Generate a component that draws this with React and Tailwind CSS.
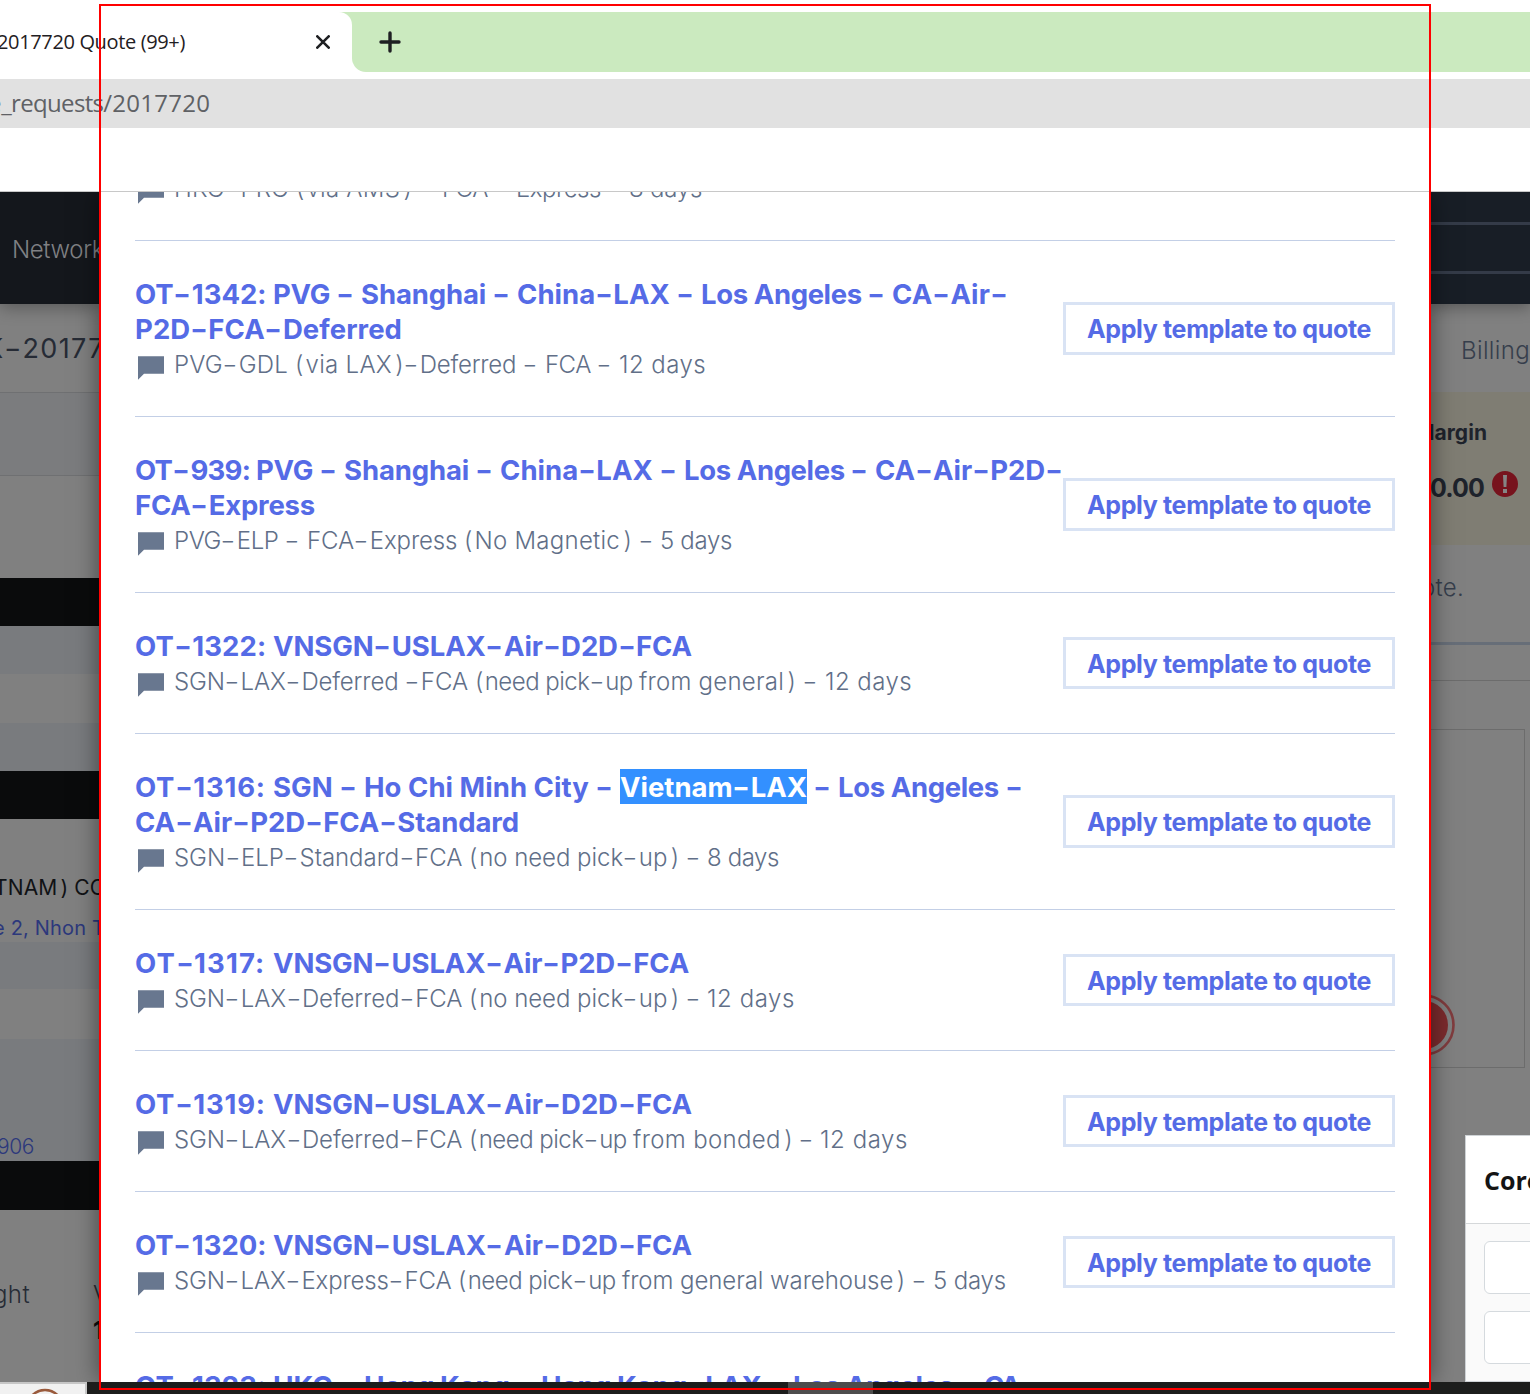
import { useLayoutEffect, useRef } from "react";

/* A run of text whose tracking is computed so that it fills `w` pixels. */
function Fit({ t, w, className = "", plain = false }) {
  const ref = useRef(null);
  useLayoutEffect(() => {
    const el = ref.current;
    const fit = () => {
      el.style.letterSpacing = "0px";
      const a = el.getBoundingClientRect().width;
      el.style.letterSpacing = "1px";
      const b = el.getBoundingClientRect().width;
      el.style.letterSpacing = b > a ? `${(w - a) / (b - a)}px` : "0px";
    };
    fit();
    document.fonts.ready.then(fit);
  }, [t, w]);
  return (
    <span ref={ref} className={"inline-block whitespace-pre " + className}>
      {plain
        ? t
        : t.split(/([-()])/).map((p, i) =>
            p === "-" ? (
              <span key={i} className="inline-block w-[0.66em] text-center">
                <span className="inline-block -translate-x-[0.5px] scale-x-140 tracking-normal">-</span>
              </span>
            ) : p === ")" ? (
              <span key={i} className="ml-[0.14em]">)</span>
            ) : p === "(" ? (
              <span key={i} className="mr-[0.08em]">(</span>
            ) : (
              p
            )
          )}
    </span>
  );
}

const rows = [
  {
    lines: [
      [["OT-1342: ", 138], ["PVG - ", 88], ["Shanghai - ", 156], ["China-LAX - ", 184], ["Los Angeles - ", 191], ["CA-Air-", 116]],
      [["P2D-FCA-Deferred", 267]],
    ],
    note: [["PVG-GDL ", 121], ["(via LAX)", 109], ["-Deferred - ", 141], ["FCA - ", 74], ["12 days", 87]],
  },
  {
    lines: [
      [["OT-939: ", 121], ["PVG - ", 88], ["Shanghai - ", 156], ["China-LAX - ", 184], ["Los Angeles - ", 191], ["CA-Air-P2D-", 188]],
      [["FCA-Express", 180]],
    ],
    note: [["PVG-ELP - ", 133], ["FCA-Express ", 157], ["(No Magnetic)", 168], [" - ", 28], ["5 days", 72]],
  },
  {
    lines: [[["OT-1322: ", 138], ["VNSGN-USLAX-Air-D2D-FCA", 419]]],
    note: [["SGN-LAX-Deferred ", 231], ["-FCA ", 70], ["(need pick-up ", 164], ["from general)", 157], [" - ", 29], ["12 days", 87]],
  },
  {
    lines: [
      [["OT-1316: ", 138], ["SGN - ", 91], ["Ho Chi Minh City - ", 256], ["Vietnam-LAX", 187, true], [" - ", 31], ["Los Angeles -", 185]],
      [["CA-Air-P2D-FCA-Standard", 384]],
    ],
    note: [["SGN-ELP-Standard-FCA ", 295], ["(no need pick-up)", 210], [" - ", 28], ["8 days", 72]],
  },
  {
    lines: [[["OT-1317: ", 138], ["VNSGN-USLAX-Air-P2D-FCA", 416]]],
    note: [["SGN-LAX-Deferred-FCA ", 295], ["(no need pick-up)", 210], [" - ", 28], ["12 days", 88]],
  },
  {
    lines: [[["OT-1319: ", 138], ["VNSGN-USLAX-Air-D2D-FCA", 419]]],
    note: [["SGN-LAX-Deferred-FCA ", 295], ["(need pick-up ", 164], ["from bonded)", 160], [" - ", 27], ["12 days", 88]],
  },
  {
    lines: [[["OT-1320: ", 138], ["VNSGN-USLAX-Air-D2D-FCA", 419]]],
    note: [["SGN-LAX-Express-FCA ", 284], ["(need pick-up ", 164], ["from general ", 148], ["warehouse)", 135], [" - ", 28], ["5 days", 73]],
  },
];

const lastTitle = [["OT-1323: ", 138], ["HKG - ", 91], ["Hong ", 76], ["Kong - ", 101], ["Hong ", 76], ["Kong-LAX - ", 176], ["Los Angeles - ", 191], ["CA-", 52]];

function NoteIcon() {
  return (
    <svg viewBox="0 0 30 24" className="ml-[3px] mt-[10px] h-[24px] w-[30px] shrink-0" fill="#68778f">
      <path d="M0 .3h26v17.5H6L0 23.8z" />
    </svg>
  );
}

function Note({ parts }) {
  return (
    <div className="flex h-[35px] whitespace-pre text-[24px] font-[350] leading-[37px] text-[#616f88]">
      <NoteIcon />
      <div className="ml-[6px] flex">
        {parts.map(([t, w], i) => <Fit key={i} t={t} w={w} />)}
      </div>
    </div>
  );
}

function TitleLine({ parts }) {
  return (
    <div className="flex h-[35px] text-[27.5px] font-bold leading-[37px] text-[#556be6]">
      {parts.map(([t, w, hl], i) => (
        <Fit key={i} t={t} w={w} className={hl ? "h-[35px] bg-[#3390ff] text-white" : ""} />
      ))}
    </div>
  );
}

function Template({ lines, note }) {
  return (
    <li className="flex items-center justify-between border-b border-[#c3cfe6] py-[35px]">
      <div className="w-[928px] shrink-0">
        {lines.map((l, i) => <TitleLine key={i} parts={l} />)}
        <Note parts={note} />
      </div>
      <button className="flex h-[52.5px] w-[332px] shrink-0 items-center justify-center border-[3px] border-[#d9e3f4] pt-[3px] text-[25px] font-bold text-[#556be6]">
        <Fit t="Apply template to quote" w={284} />
      </button>
    </li>
  );
}

function BrowserChrome() {
  return (
    <header className="h-[192px] border-b border-[#c8c8c8] bg-white pt-3 font-['Open_Sans',sans-serif]">
      <div className="flex h-[60px] bg-[#cbeabf]">
        <div className="flex w-[352px] shrink-0 items-center overflow-hidden rounded-tr-[13px] bg-white text-[20px] text-[#1f2023]">
          <Fit plain t="2017720 Quote (99+)" w={188} className="-ml-[3px] shrink-0" />
          <svg viewBox="0 0 14 14" className="ml-[131px] h-[14px] w-[14px]" stroke="#1f2023" strokeWidth="2.6" strokeLinecap="round">
            <path d="M1.3 1.3l11.4 11.4M12.7 1.3L1.3 12.7" />
          </svg>
        </div>
        <div className="flex flex-1 items-center bg-white">
          <div className="flex h-full flex-1 items-center rounded-bl-[14px] bg-[#cbeabf]">
            <svg viewBox="0 0 22 22" className="ml-[27px] h-[22px] w-[22px]" stroke="#1f2023" strokeWidth="3.4" strokeLinecap="round">
              <path d="M11 2v18M2 11h18" />
            </svg>
          </div>
        </div>
      </div>
      <div className="mt-[7px] flex h-[49px] items-center overflow-hidden bg-[#e1e1e1] pb-0.5 text-[24px] text-[#5f6165]">
        <span className="-ml-[12px] whitespace-pre tracking-[-0.2px]">e</span>
        <Fit plain t="_requests" w={102} />
        <Fit plain t="/2017720" w={107} />
      </div>
    </header>
  );
}

function LeftBackdrop() {
  return (
    <aside className="flex w-[100px] shrink-0 flex-col overflow-hidden whitespace-nowrap bg-[#808080]">
      <div className="z-10 flex h-[112px] shrink-0 items-center bg-[#14171c] pl-[12px] pt-1 text-[24px] font-[350] text-[#808184] shadow-[0_4px_16px_rgba(0,0,0,0.3)]">
        <Fit t="Network" w={92} />
      </div>
      <div className="flex h-[88px] shrink-0 items-center pt-0.5 text-[27px] text-[#262b35]">
        <Fit t="K-20177" w={120} className="-ml-[15px]" />
      </div>
      <div className="h-[84px] shrink-0 border-y border-[#6f7072] bg-[#7b7c7e]" />
      <div className="h-[102px] shrink-0" />
      <div className="h-[48px] shrink-0 bg-[#0a0b0c]" />
      <div className="h-[48px] shrink-0 bg-[#797b7e]" />
      <div className="h-[49px] shrink-0" />
      <div className="h-[48px] shrink-0 bg-[#797b7e]" />
      <div className="h-[48px] shrink-0 bg-[#0a0b0c]" />
      <div className="h-[123px] shrink-0 pt-[49px] text-[21px] leading-[40px]">
        <div className="h-10 text-[#101215]"><Fit t="TNAM) CO" w={112} className="-ml-[6px]" /></div>
        <div className="h-10 text-[20px] text-[#2c387c]"><Fit t="e 2, Nhon T" w={112} className="-ml-[7px]" /></div>
      </div>
      <div className="h-[47px] shrink-0 bg-[#797b7e]" />
      <div className="h-[50px] shrink-0" />
      <div className="h-[122px] shrink-0 bg-[#797b7e] pt-[93px] text-[21px] font-[350] leading-[30px] text-[#2c387c]">
        <Fit t="906" w={37} className="-ml-[3px]" />
      </div>
      <div className="h-[49px] shrink-0 bg-[#0a0b0c]" />
      <div className="flex flex-1 justify-between pt-[67px] text-[24px] leading-[36px] text-[#262b35]">
        <Fit t="ght" w={37} className="-ml-[7px] font-[350]" />
        <div className="w-[7px]">
          <div className="font-light">V</div>
          <div className="font-bold text-[#0d0e10]">1</div>
        </div>
      </div>
    </aside>
  );
}

function RightBackdrop() {
  return (
    <aside className="flex w-[100px] shrink-0 flex-col overflow-hidden whitespace-nowrap bg-[#808080]">
      <div className="z-10 h-[112px] shrink-0 bg-[#181e26] pt-[30px] shadow-[0_4px_14px_rgba(0,0,0,0.3)]">
        <div className="h-[52px] border-y-[3px] border-[#343b48]" />
      </div>
      <div className="h-[88px] shrink-0 pl-[31px] text-[24px] font-[350] leading-[94px] text-[#363e4c]">
        <Fit t="Billing" w={69} />
      </div>
      <div className="h-[153px] shrink-0 bg-[#7f7d73] pt-[25px] font-bold text-[#1e232c]">
        <div className="h-8 text-[21px] leading-8"><Fit t="Margin" w={72} className="-ml-[15px]" /></div>
        <div className="mt-[20px] flex h-10 items-center text-[25px]">
          <Fit t="0.00" w={54} />
          <svg viewBox="0 0 26 26" className="-mt-[11px] ml-[8px] h-[26px] w-[26px] shrink-0">
            <circle cx="13" cy="13" r="13" fill="#77131d" />
            <path d="M11 4h4l-.6 12h-2.8zM11 18h4v4h-4z" fill="#858585" />
          </svg>
        </div>
      </div>
      <div className="h-[100px] shrink-0 border-b-[3px] border-[#676e78] text-[24px] font-[350] leading-[85px] text-[#363e4c]">
        <Fit t="ote." w={43} className="-ml-[9px]" />
      </div>
      <div className="h-[36px] shrink-0 border-b border-[#6c6c6c]" />
      <div className="mt-[48px] flex h-[339px] w-[95px] shrink-0 items-end border-y border-r border-[#6c6c6c]">
        <svg viewBox="0 0 64 64" className="-ml-[38px] mb-[10px] h-[64px] w-[64px]">
          <circle cx="32" cy="32" r="24" fill="#7c2b2d" />
          <circle cx="32" cy="32" r="29.5" fill="none" stroke="#803c3e" strokeWidth="2.6" />
        </svg>
      </div>
      <div className="mt-[67px] ml-[35px] flex-1 border border-r-0 border-[#cfd3d6] bg-[#fafafa]">
        <div className="h-[88px] border-b border-[#d5d8da] bg-white pl-[18px] font-['Open_Sans',sans-serif] text-[25px] font-bold leading-[89px] text-[#141414]">
          Core
        </div>
        <div className="ml-[18px] mt-[17px] h-[53px] w-[100px] rounded-md border border-[#d5dade] bg-white" />
        <div className="ml-[18px] mt-[17px] h-[53px] w-[100px] rounded-md border border-[#d5dade] bg-white" />
      </div>
    </aside>
  );
}

export default function App() {
  return (
    <div className="relative flex h-[1394px] w-[1530px] flex-col overflow-hidden bg-white font-['Inter',sans-serif]">
      <BrowserChrome />
      <div className="flex h-[1190px] shrink-0 overflow-hidden">
        <LeftBackdrop />
        <main className="z-20 w-[1330px] shrink-0 overflow-hidden bg-white px-[35px] shadow-[0_0_24px_rgba(0,0,0,0.5)]">
          <div className="flex h-[49px] flex-col justify-end overflow-hidden border-b border-[#c3cfe6] pb-[35px]">
            <Note parts={[["HKG-PRG ", 122], ["(via AMS)", 116], [" - ", 30], ["FCA - ", 74], ["Express - ", 113], ["8 days", 73]]} />
          </div>
          <ul>
            {rows.map((r, i) => <Template key={i} {...r} />)}
            <li className="pt-[35px]"><TitleLine parts={lastTitle} /></li>
          </ul>
        </main>
        <RightBackdrop />
      </div>
      <footer className="flex h-3 shrink-0 bg-[#1c1d1c]">
        <div className="flex h-3 w-[87px] justify-center overflow-hidden border-r-2 border-t-2 border-[#c6c6c6] bg-[#f1f1f1]">
          <svg viewBox="0 0 40 40" className="ml-[4px] mt-1 h-10 w-10 shrink-0" fill="none" stroke="#9a5a3c" strokeWidth="2.5">
            <circle cx="20" cy="20" r="18" />
          </svg>
        </div>
        <div className="ml-[701px] h-3 w-[85px] bg-[#4d4d4d]" />
      </footer>
      <div className="pointer-events-none absolute left-[99px] top-1 z-30 h-[1386px] w-[1332px] border-2 border-[#ff0000]" />
    </div>
  );
}
